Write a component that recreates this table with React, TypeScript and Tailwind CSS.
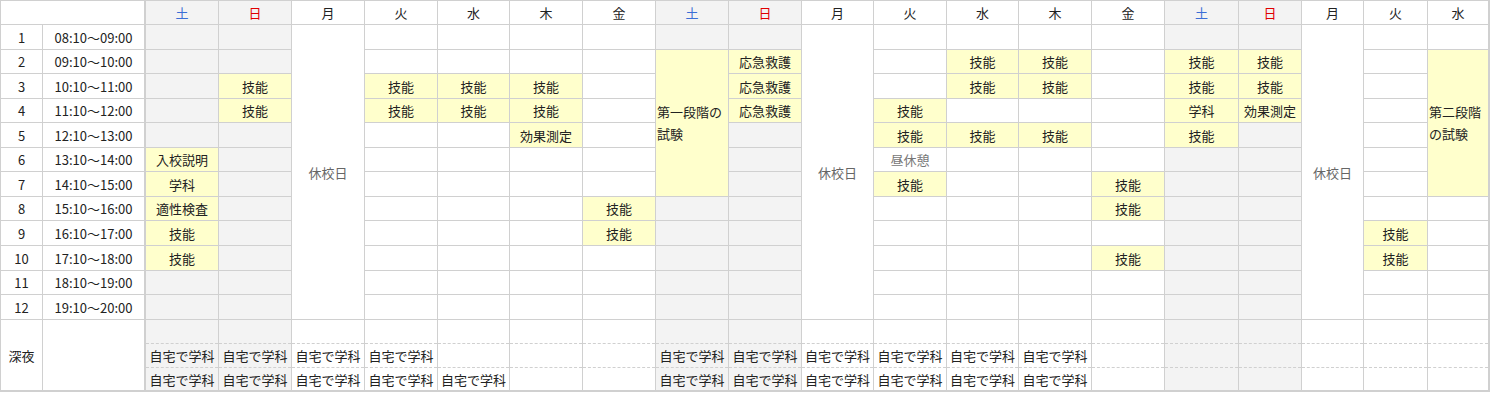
import React from 'react';

const days = ['土', '日', '月', '火', '水', '木', '金', '土', '日', '月', '火', '水', '木', '金', '土', '日', '月', '火', '水'];
const weekend = new Set([0, 1, 7, 8, 14, 15]);
const holiday = new Set([2, 9, 16]);
const times = [
  '08:10～09:00',
  '09:10～10:00',
  '10:10～11:00',
  '11:10～12:00',
  '12:10～13:00',
  '13:10～14:00',
  '14:10～15:00',
  '15:10～16:00',
  '16:10～17:00',
  '17:10～18:00',
  '18:10～19:00',
  '19:10～20:00',
];

const sched: Record<number, Record<number, string>> = {
  0: { 6: '入校説明', 7: '学科', 8: '適性検査', 9: '技能', 10: '技能' },
  1: { 3: '技能', 4: '技能' },
  3: { 3: '技能', 4: '技能' },
  4: { 3: '技能', 4: '技能' },
  5: { 3: '技能', 4: '技能', 5: '効果測定' },
  6: { 8: '技能', 9: '技能' },
  8: { 2: '応急救護', 3: '応急救護', 4: '応急救護' },
  10: { 4: '技能', 5: '技能', 6: '昼休憩', 7: '技能' },
  11: { 2: '技能', 3: '技能', 5: '技能' },
  12: { 2: '技能', 3: '技能', 5: '技能' },
  13: { 7: '技能', 8: '技能', 10: '技能' },
  14: { 2: '技能', 3: '技能', 4: '学科', 5: '技能' },
  15: { 2: '技能', 3: '技能', 4: '効果測定' },
  17: { 9: '技能', 10: '技能' },
};

const exams: Record<number, string> = { 7: '第一段階の試験', 18: '第二段階の試験' };

const night2 = new Set([0, 1, 2, 3, 7, 8, 9, 10, 11, 12]);
const night3 = new Set([0, 1, 2, 3, 4, 7, 8, 9, 10, 11, 12]);

const base = 'flex items-center justify-center border-r border-b border-[#d0d0d0] whitespace-nowrap overflow-hidden';

export default function App() {
  const cells: React.ReactNode[] = [];

  cells.push(<div key="h-corner" className="col-span-2 border-r-2 border-b border-[#d0d0d0]" />);
  days.forEach((d, i) => {
    const color = d === '土' ? 'text-[#3b6fd6]' : d === '日' ? 'text-[#e00000]' : 'text-[#222]';
    cells.push(
      <div key={'h' + i} className={`${base} ${weekend.has(i) ? 'bg-[#f3f3f3]' : 'bg-white'} ${color}`}>
        {d}
      </div>
    );
  });

  for (let r = 1; r <= 12; r++) {
    cells.push(
      <div key={'n' + r} className={base}>
        {r}
      </div>
    );
    cells.push(
      <div
        key={'t' + r}
        className="flex items-center justify-center border-r-2 border-b border-[#d0d0d0] whitespace-nowrap"
      >
        {times[r - 1]}
      </div>
    );
    days.forEach((_, i) => {
      const key = `c${r}-${i}`;
      if (holiday.has(i)) {
        if (r === 1) {
          cells.push(
            <div key={key} className={`${base} row-span-12 bg-white text-[#666]`}>
              休校日
            </div>
          );
        }
        return;
      }
      if (exams[i] && r >= 2 && r <= 7) {
        if (r === 2) {
          cells.push(
            <div
              key={key}
              className="row-span-6 flex items-center border-r border-b border-[#d0d0d0] bg-[#ffffcc] px-px text-left leading-[22px] break-all"
            >
              {exams[i]}
            </div>
          );
        }
        return;
      }
      const text = sched[i]?.[r];
      if (text === '昼休憩') {
        cells.push(
          <div key={key} className={`${base} bg-white text-[#777]`}>
            {text}
          </div>
        );
      } else if (text) {
        cells.push(
          <div key={key} className={`${base} bg-[#ffffcc]`}>
            {text}
          </div>
        );
      } else {
        cells.push(<div key={key} className={`${base} ${weekend.has(i) ? 'bg-[#f3f3f3]' : 'bg-white'}`} />);
      }
    });
  }

  cells.push(
    <div key="night" className={base}>
      深夜
    </div>
  );
  cells.push(<div key="night-t" className="border-r-2 border-b border-[#d0d0d0]" />);
  days.forEach((_, i) => {
    cells.push(
      <div
        key={'nt' + i}
        className={`flex flex-col border-r border-b border-[#d0d0d0] ${weekend.has(i) ? 'bg-[#f3f3f3]' : 'bg-white'}`}
      >
        <div className="h-[24px] border-b border-dashed border-[#d0d0d0]" />
        <div className="flex h-[24px] items-center justify-center whitespace-nowrap border-b border-dashed border-[#d0d0d0]">
          {night2.has(i) ? '自宅で学科' : ''}
        </div>
        <div className="flex flex-1 items-center justify-center whitespace-nowrap">
          {night3.has(i) ? '自宅で学科' : ''}
        </div>
      </div>
    );
  });

  return (
    <div className="min-h-[394px] w-full bg-white">
      <div className="inline-grid grid-cols-[42px_103px_73px_73px_73px_73px_72px_73px_73px_73px_73px_72px_73px_72px_73px_73px_74px_63px_62px_64px_61px] grid-rows-[24px_25px_24px_25px_24px_25px_24px_25px_24px_25px_25px_24px_25px_71px] border border-[#d0d0d0] font-['Noto_Sans_CJK_JP','Noto_Sans',sans-serif] text-[13px] leading-none text-[#222]">
        {cells}
      </div>
    </div>
  );
}
